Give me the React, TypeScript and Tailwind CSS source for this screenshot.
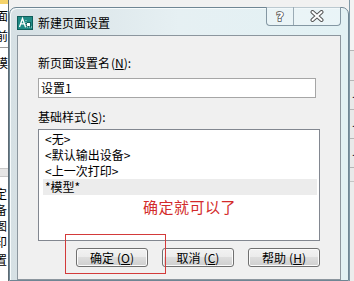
import React from 'react';

const WinButton: React.FC<{ label: string; hotkey: string }> = ({ label, hotkey }) => (
  <div className="w-[72px] h-[19px] flex items-center justify-center rounded-[3px] border border-[#707070] bg-[linear-gradient(#f2f2f2,#ebebeb_50%,#dddddd_50%,#cfcfcf)] shadow-[inset_0_0_0_1px_#fbfbfb] text-[12px] leading-[14px] text-black">
    {label}
    <span className="ml-[3px]">
      (<span className="underline underline-offset-[1px]">{hotkey}</span>)
    </span>
  </div>
);

const AcadIcon = () => (
  <svg width="16" height="14" viewBox="0 0 16 14">
    <rect x="0.5" y="0.5" width="15" height="13" fill="#1f8a85" stroke="#0e5d5a" />
    <path d="M2.5 11 L5.5 2.5 L8.5 11 M3.8 7.8 H7.2" stroke="#fff" strokeWidth="1.3" fill="none" />
    <rect x="9.5" y="6.5" width="4" height="4" fill="#fff" stroke="#0e5d5a" />
    <path d="M9 4 V12 M8 11 H15" stroke="#e8f6f5" strokeWidth="0.8" strokeDasharray="1 1" />
  </svg>
);

const listItems = ['<无>', '<默认输出设备>', '<上一次打印>'];

export default function App() {
  return (
    <div className="relative w-[354px] h-[281px] overflow-hidden flex bg-[#f2f2f2] font-['Noto_Sans_CJK_SC','Noto_Sans',sans-serif] text-black">
      {/* background app, left sliver */}
      <div className="w-[9px] shrink-0 flex flex-col overflow-hidden bg-white border-r border-[#5d6a73] text-[12px] leading-[16px]">
        <div className="h-[4px] bg-[#f5d36b]" />
        <div className="h-[4px]" />
        <div className="h-[16px] -ml-[4px] whitespace-nowrap">面</div>
        <div className="h-[4px]" />
        <div className="h-[16px] -ml-[4px] whitespace-nowrap">前</div>
        <div className="h-[1px] mt-[3px] bg-[#9a9a9a]" />
        <div className="h-[7px]" />
        <div className="h-[16px] -ml-[4px] whitespace-nowrap">模</div>
        <div className="h-[97px]" />
        <div className="h-[9px] bg-[#e6e6e6] border-y border-[#c9c9c9]" />
        <div className="h-[9px]" />
        <div className="h-[16px] -ml-[5px] whitespace-nowrap">定</div>
        <div className="h-[16px] -ml-[5px] whitespace-nowrap">备</div>
        <div className="h-[16px] -ml-[5px] whitespace-nowrap">图</div>
        <div className="h-[16px] -ml-[5px] whitespace-nowrap">印</div>
        <div className="h-[16px] mt-[2px] -ml-[5px] whitespace-nowrap">置</div>
      </div>

      {/* dialog column */}
      <div className="w-[340px] shrink-0 flex flex-col">
        <div className="h-[7px] bg-[#f1f1f1]" />
        <div className="flex-1 flex flex-col rounded-t-[7px] border border-[#6f8694] bg-linear-to-r from-[#d6e0e4] via-[#e6f0f3] to-[#e2f1f4] px-[7px] shadow-[inset_1px_1px_0_#f7fbfc]">
          {/* title bar */}
          <div className="h-[27px] flex items-start shrink-0">
            <div className="mt-[8px] flex items-center">
              <AcadIcon />
              <span className="ml-[5px] text-[12px] leading-[14px]">新建页面设置</span>
            </div>
            <div className="flex-1" />
            <div className="-mt-[1px] flex h-[19px] rounded-b-[4px] border border-t-0 border-[#8497a3] bg-[#eef6f8]/60">
              <div className="w-[27px] flex items-center justify-center border-r border-[#9aabb5]">
                <svg width="10" height="14" viewBox="0 0 10 14">
                  <text x="5" y="12" textAnchor="middle" fontSize="13" fontWeight="bold" fontFamily="DejaVu Sans, sans-serif" fill="#fff" stroke="#555" strokeWidth="1.6" paintOrder="stroke">?</text>
                </svg>
              </div>
              <div className="w-[46px] flex items-center justify-center">
                <svg width="14" height="12" viewBox="0 0 14 12">
                  <path d="M2.5 2 L11.5 10 M11.5 2 L2.5 10" stroke="#555" strokeWidth="4" strokeLinecap="round" />
                  <path d="M2.5 2 L11.5 10 M11.5 2 L2.5 10" stroke="#fff" strokeWidth="2" strokeLinecap="round" />
                </svg>
              </div>
            </div>
          </div>

          {/* client area */}
          <div className="flex-1 border border-[#8c969e] bg-[#f0f0f0] pl-[20px] text-[12px]">
            <div className="mt-[19px] h-[16px] leading-[16px]">
              新页面设置名<span className="ml-[1px]">(<span className="underline">N</span>)</span>:
            </div>
            <div className="mt-[7px] w-[278px] h-[20px] border border-[#a6a6a6] bg-white pl-[2px] leading-[18px]">设置1</div>
            <div className="mt-[11px] h-[16px] leading-[16px]">
              基础样式<span className="ml-[1px]">(<span className="underline">S</span>)</span>:
            </div>
            <div className="mt-[4px] w-[282px] h-[112px] border border-[#828790] bg-white pt-[1px] flex flex-col">
              {listItems.map((t) => (
                <div key={t} className="h-[16px] leading-[16px] pl-[6px]">{t}</div>
              ))}
              <div className="h-[16px] leading-[16px] ml-[4px] mr-[2px] pl-[2px] bg-[#ececec]">*模型*</div>
            </div>
            <div className="mt-[7px] w-[282px] flex justify-end gap-[14px]">
              <WinButton label="确定" hotkey="O" />
              <WinButton label="取消" hotkey="C" />
              <WinButton label="帮助" hotkey="H" />
            </div>
          </div>
        </div>
      </div>

      {/* background app, right sliver */}
      <div className="flex-1 flex flex-col bg-[#f3f3f3] border-l border-[#7f98a6]">
        <div className="h-[50px]" />
        <div className="h-[30px] border-t border-[#b5b5b5] bg-[#e9e9e9]" />
        <div className="h-[29px] border-t border-[#b5b5b5] bg-[#e9e9e9] pl-[2px] leading-[26px] text-[10px]">.</div>
        <div className="h-[29px] border-t border-[#b5b5b5] bg-[#e9e9e9] pl-[2px] leading-[26px] text-[10px]">.</div>
        <div className="h-[29px] border-t border-[#b5b5b5] bg-[#e9e9e9] pl-[2px] leading-[26px] text-[10px]">.</div>
        <div className="h-[14px] border-t border-[#b5b5b5] bg-[#e9e9e9]" />
        <div className="flex-1 border-t border-[#c5c5c5] bg-[#ececec]" />
      </div>

      {/* annotations drawn over the screenshot */}
      <div className="absolute left-[143px] top-[198px] text-[15px] leading-[18px] tracking-[0.5px] text-[#d32b2b] whitespace-nowrap">
        确定就可以了
      </div>
      <div className="absolute left-[65px] top-[234px] w-[101px] h-[40px] border border-[#d33a3a]" />
    </div>
  );
}
